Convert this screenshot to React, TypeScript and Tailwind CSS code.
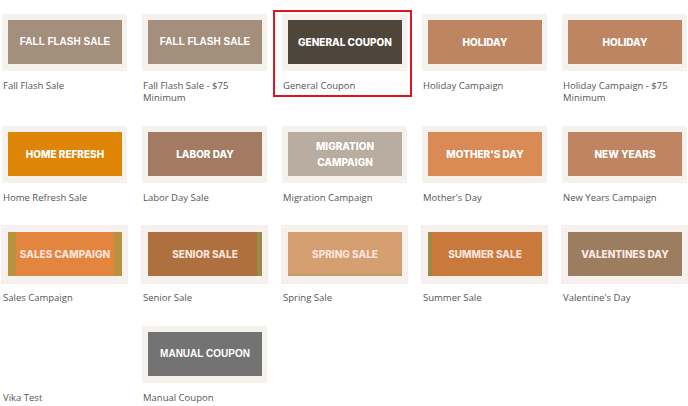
import React from "react";

type Item = {
  label: string;
  banner?: React.ReactNode;
  bg?: string;
  text?: string;
  font?: string;
  pink?: boolean;
  highlight?: boolean;
};

const items: Item[] = [
  { label: "Fall Flash Sale", banner: "FALL FLASH SALE", bg: "bg-[#a48e7c]", font: "arial" },
  { label: "Fall Flash Sale - $75 Minimum", banner: "FALL FLASH SALE", bg: "bg-[#a48e7c]", font: "arial" },
  { label: "General Coupon", banner: "GENERAL COUPON", bg: "bg-[#4e453b]", highlight: true },
  { label: "Holiday Campaign", banner: "HOLIDAY", bg: "bg-[#bd8562]" },
  { label: "Holiday Campaign - $75 Minimum", banner: "HOLIDAY", bg: "bg-[#bd8562]" },
  { label: "Home Refresh Sale", banner: "HOME REFRESH", bg: "bg-[#de8406]" },
  { label: "Labor Day Sale", banner: "LABOR DAY", bg: "bg-[#a37b63]" },
  {
    label: "Migration Campaign",
    banner: (
      <>
        MIGRATION
        <br />
        CAMPAIGN
      </>
    ),
    bg: "bg-[#b9aca1]",
  },
  { label: "Mother's Day", banner: "MOTHER'S DAY", bg: "bg-[#d98a55]" },
  { label: "New Years Campaign", banner: "NEW YEARS", bg: "bg-[#bf8562]" },
  {
    label: "Sales Campaign",
    banner: "SALES CAMPAIGN",
    bg: "bg-[linear-gradient(90deg,#b8923f_0px,#b8923f_8px,#e4853f_8px,#e4853f_106px,#b8923f_106px)]",
    text: "text-[#fde3dc]",
    pink: true,
  },
  {
    label: "Senior Sale",
    banner: "SENIOR SALE",
    bg: "bg-[linear-gradient(90deg,#ae703f_0px,#ae703f_109px,#9a8947_109px)]",
    text: "text-[#fde3dc]",
    pink: true,
  },
  {
    label: "Spring Sale",
    banner: "SPRING SALE",
    bg: "bg-[linear-gradient(180deg,#d59f72_0px,#d59f72_42px,#b9a06a_42px)]",
    text: "text-[#fde3dc]",
    pink: true,
  },
  {
    label: "Summer Sale",
    banner: "SUMMER SALE",
    bg: "bg-[linear-gradient(90deg,#9a8a3e_0px,#9a8a3e_4px,#c9793c_4px)]",
    text: "text-[#fde3dc]",
    pink: true,
  },
  { label: "Valentine's Day", banner: "VALENTINES DAY", bg: "bg-[#9c7d5f]", text: "text-[#fde9e4]", pink: true },
  { label: "Vika Test" },
  { label: "Manual Coupon", banner: "MANUAL COUPON", bg: "bg-[#737373]", font: "arial" },
];

function Cell({ item }: { item: Item }) {
  const fontClass =
    item.font === "arial"
      ? "font-['Liberation_Sans',Arial,sans-serif] font-bold text-[10px]"
      : "font-['Inter','Liberation_Sans',sans-serif] font-extrabold text-[10px]";
  return (
    <div className="relative flex flex-col">
      {item.highlight && (
        <div className="pointer-events-none absolute left-[-9px] top-[-4px] h-[87px] w-[139px] border-2 border-[#e0141c]" />
      )}
      {item.banner ? (
        <div
          className={`h-[57px] w-[125px] bg-[#f5f2ee] pl-[6px] pr-[5px] pt-[6px] pb-[7px] ${
            item.pink ? "shadow-[0_0_0_1px_#fde8ef]" : ""
          }`}
        >
          <div
            className={`flex h-[44px] w-full items-center justify-center whitespace-nowrap text-center leading-[16px] ${item.bg} ${
              item.text ?? "text-white"
            } ${fontClass}`}
          >
            <span>{item.banner}</span>
          </div>
        </div>
      ) : (
        <div className="h-[57px] w-[125px]" />
      )}
      <div className="mt-[9px] w-[125px] pl-[1px] font-['Open_Sans','Liberation_Sans',sans-serif] text-[9.5px] leading-[12px] text-[#555]">
        {item.label}
      </div>
    </div>
  );
}

export default function App() {
  return (
    <div className="h-[406px] w-[688px] overflow-hidden bg-white">
      <div className="grid grid-cols-[repeat(5,125px)] gap-x-[15px] gap-y-[22px] pl-[2px] pt-[14px]">
        {items.map((it, i) => (
          <Cell key={i} item={it} />
        ))}
      </div>
    </div>
  );
}
